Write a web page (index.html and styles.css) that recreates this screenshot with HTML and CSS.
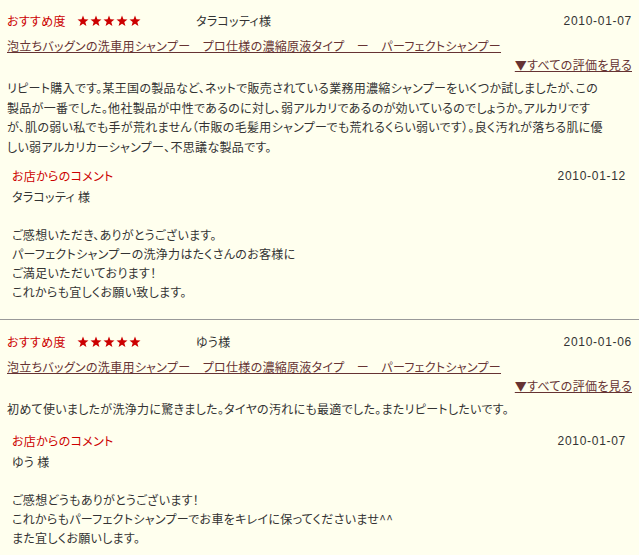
FILE: index.html
```html
<!DOCTYPE html>
<html lang="ja">
<head>
<meta charset="utf-8">
<title>レビュー</title>
<link rel="stylesheet" href="styles.css">
</head>
<body>
<div class="review">
  <div class="head">
    <div class="rate"><span class="label">おすすめ度</span><span class="stars"><svg class="star" viewBox="0 0 24 24"><polygon points="12,1 14.9,8.6 23,8.9 16.6,13.9 18.8,21.8 12,17.3 5.2,21.8 7.4,13.9 1,8.9 9.1,8.6"/></svg><svg class="star" viewBox="0 0 24 24"><polygon points="12,1 14.9,8.6 23,8.9 16.6,13.9 18.8,21.8 12,17.3 5.2,21.8 7.4,13.9 1,8.9 9.1,8.6"/></svg><svg class="star" viewBox="0 0 24 24"><polygon points="12,1 14.9,8.6 23,8.9 16.6,13.9 18.8,21.8 12,17.3 5.2,21.8 7.4,13.9 1,8.9 9.1,8.6"/></svg><svg class="star" viewBox="0 0 24 24"><polygon points="12,1 14.9,8.6 23,8.9 16.6,13.9 18.8,21.8 12,17.3 5.2,21.8 7.4,13.9 1,8.9 9.1,8.6"/></svg><svg class="star" viewBox="0 0 24 24"><polygon points="12,1 14.9,8.6 23,8.9 16.6,13.9 18.8,21.8 12,17.3 5.2,21.8 7.4,13.9 1,8.9 9.1,8.6"/></svg></span></div>
    <div class="name">タラコッティ様</div>
    <div class="date">2010-01-07</div>
  </div>
  <div class="title"><a href="#">泡立ちバッグンの洗車用シャンプー　プロ仕様の濃縮原液タイプ　ー　パーフェクトシャンプー</a></div>
  <div class="all"><a href="#">▼すべての評価を見る</a></div>
  <p class="body">リピート購入です。某王国の製品など、ネットで販売されている業務用濃縮シャンプーをいくつか試しましたが、この<br>製品が一番でした。他社製品が中性であるのに対し、弱アルカリであるのが効いているのでしょうか。アルカリです<br>が、肌の弱い私でも手が荒れません（市販の毛髪用シャンプーでも荒れるくらい弱いです）。良く汚れが落ちる肌に優<br>しい弱アルカリカーシャンプー、不思議な製品です。</p>
  <div class="shop">
    <div class="shop-head"><span class="shop-label">お店からのコメント</span><span class="date">2010-01-12</span></div>
    <p class="shop-text">タラコッティ 様<br><br>ご感想いただき、ありがとうございます。<br>パーフェクトシャンプーの洗浄力はたくさんのお客様に<br>ご満足いただいております！<br>これからも宜しくお願い致します。</p>
  </div>
</div>
<div class="review">
  <div class="head">
    <div class="rate"><span class="label">おすすめ度</span><span class="stars"><svg class="star" viewBox="0 0 24 24"><polygon points="12,1 14.9,8.6 23,8.9 16.6,13.9 18.8,21.8 12,17.3 5.2,21.8 7.4,13.9 1,8.9 9.1,8.6"/></svg><svg class="star" viewBox="0 0 24 24"><polygon points="12,1 14.9,8.6 23,8.9 16.6,13.9 18.8,21.8 12,17.3 5.2,21.8 7.4,13.9 1,8.9 9.1,8.6"/></svg><svg class="star" viewBox="0 0 24 24"><polygon points="12,1 14.9,8.6 23,8.9 16.6,13.9 18.8,21.8 12,17.3 5.2,21.8 7.4,13.9 1,8.9 9.1,8.6"/></svg><svg class="star" viewBox="0 0 24 24"><polygon points="12,1 14.9,8.6 23,8.9 16.6,13.9 18.8,21.8 12,17.3 5.2,21.8 7.4,13.9 1,8.9 9.1,8.6"/></svg><svg class="star" viewBox="0 0 24 24"><polygon points="12,1 14.9,8.6 23,8.9 16.6,13.9 18.8,21.8 12,17.3 5.2,21.8 7.4,13.9 1,8.9 9.1,8.6"/></svg></span></div>
    <div class="name">ゆう様</div>
    <div class="date">2010-01-06</div>
  </div>
  <div class="title"><a href="#">泡立ちバッグンの洗車用シャンプー　プロ仕様の濃縮原液タイプ　ー　パーフェクトシャンプー</a></div>
  <div class="all"><a href="#">▼すべての評価を見る</a></div>
  <p class="body">初めて使いましたが洗浄力に驚きました。タイヤの汚れにも最適でした。またリピートしたいです。</p>
  <div class="shop shop-short">
    <div class="shop-head"><span class="shop-label">お店からのコメント</span><span class="date">2010-01-07</span></div>
    <p class="shop-text">ゆう 様<br><br>ご感想どうもありがとうございます！<br>これからもパーフェクトシャンプーでお車をキレイに保ってくださいませ^^<br>また宜しくお願いします。</p>
  </div>
</div>
</body>
</html>
```
FILE: styles.css
```css
html, body {
  margin: 0;
  padding: 0;
  background: #FFFFEE;
}
body {
  font-family: "Noto Sans CJK JP", "Noto Sans", sans-serif;
  font-size: 12px;
  color: #333333;
  font-feature-settings: "palt";
  letter-spacing: 0.3px;
}
a {
  color: #663333;
  text-decoration: underline;
}
.review {
  padding: 12px 7px 18px;
  border-bottom: 1px solid #999999;
}
.review + .review {
  padding-top: 13px;
}
.review:last-child {
  border-bottom: none;
}
.head {
  display: grid;
  grid-template-columns: 189px 1fr auto;
  align-items: center;
  line-height: 18px;
}
.rate {
  display: flex;
  align-items: center;
}
.label {
  color: #CC0000;
}
.stars {
  display: flex;
  gap: 1px;
  margin-left: 11px;
}
.star {
  width: 12px;
  height: 12px;
  fill: #CC0000;
  display: block;
}
.date {
  font-family: "Liberation Sans", sans-serif;
  font-feature-settings: normal;
  letter-spacing: 0.7px;
}
.title {
  margin-top: 7px;
  line-height: 18px;
}
.all {
  margin-top: 1px;
  line-height: 18px;
  text-align: right;
}
.body {
  margin: 4px 0 0;
  line-height: 19.5px;
}
.shop {
  margin-top: 11px;
  padding: 0 6px 0 5px;
}
.shop-short {
  margin-top: 13px;
}
.shop-head {
  display: flex;
  justify-content: space-between;
  line-height: 18px;
}
.shop-label {
  color: #CC0000;
}
.shop-text {
  margin: 2px 0 0;
  line-height: 19px;
}
```
